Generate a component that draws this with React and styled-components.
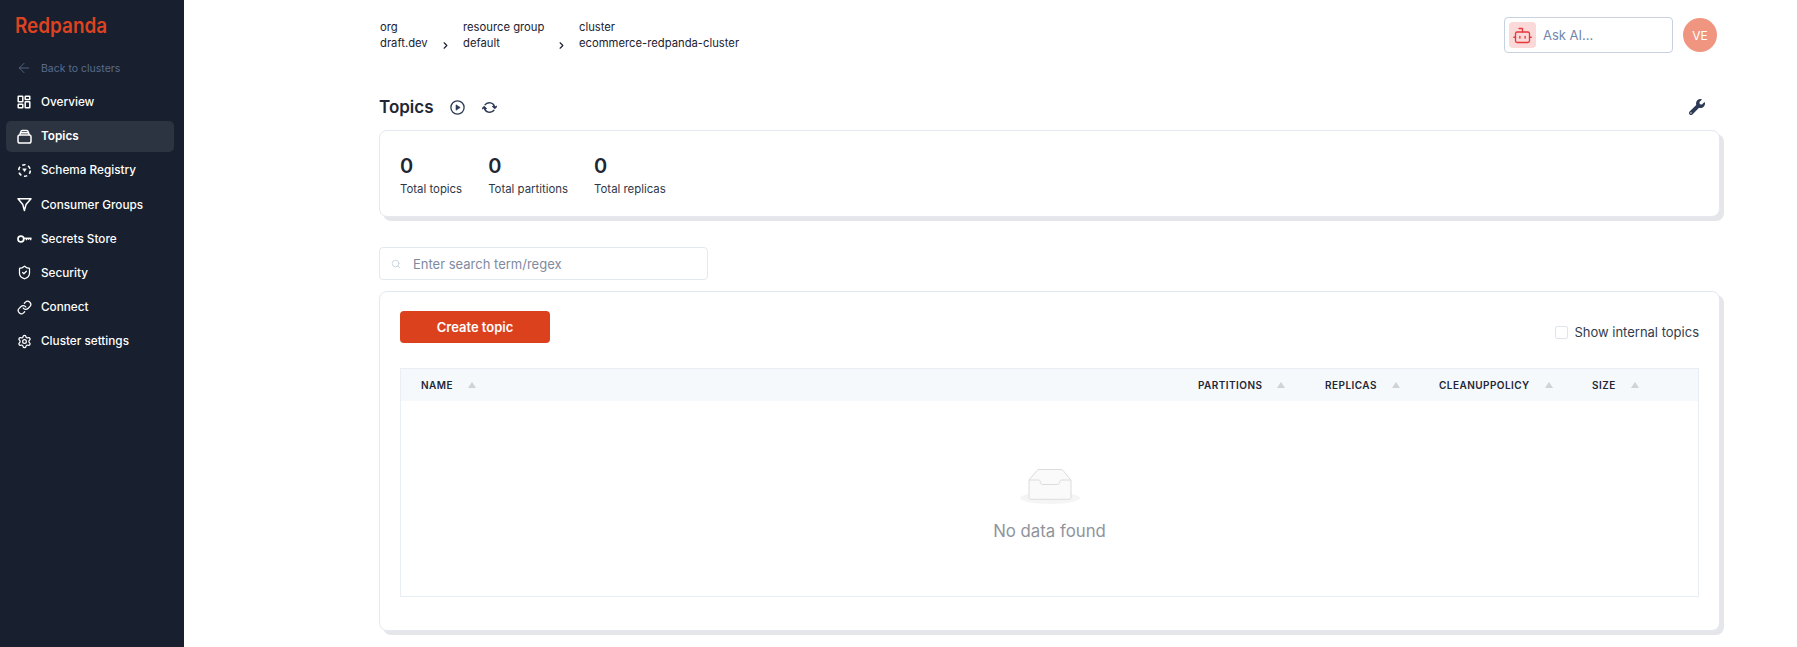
import React from "react";
import styled, { createGlobalStyle } from "styled-components";
import { ArrowLeft, Bot, ChevronRight, Link, Search, Settings, ShieldCheck } from "lucide-react";
import { FaWrench } from "react-icons/fa";

const Global = createGlobalStyle`
  html, body { margin: 0; padding: 0; background: #fff; height: 100%; overflow: hidden; }
  body { font-family: Inter, "Liberation Sans", sans-serif; color: #1a202c; }
  * { box-sizing: border-box; }
`;

const Page = styled.div`
  display: flex;
  width: 1797px;
  height: 647px;
  overflow: hidden;
`;

const Sidebar = styled.aside`
  width: 184px;
  flex: none;
  background: #181f2e;
  color: #fff;
  padding: 13px 10px 0 6px;
`;

const Logo = styled.div`
  font-size: 21px;
  line-height: 25px;
  font-weight: 600;
  color: #dd4320;
  padding-left: 10px;
  transform: scaleX(0.9);
  transform-origin: left;
`;

const BackLink = styled.div`
  display: flex;
  align-items: center;
  gap: 9px;
  height: 20px;
  margin-top: 20px;
  padding-left: 10px;
  color: #5a6b8c;
  font-size: 10.5px;
`;

const Nav = styled.nav`
  display: flex;
  flex-direction: column;
  margin-top: 8.5px;
  gap: 3.2px;
`;

const NavItem = styled.div`
  display: flex;
  align-items: center;
  gap: 10px;
  height: 31px;
  padding-left: 11px;
  border-radius: 5px;
  font-size: 11.75px;
  color: #fff;
  background: ${(p) => (p.$active ? "#2c3341" : "transparent")};
  font-weight: ${(p) => (p.$active ? 600 : 500)};
`;

const IconSlot = styled.span`
  width: 14px;
  height: 14px;
  flex: none;
  display: flex;
  align-items: center;
  justify-content: center;
  & > svg { flex: none; }
`;

const Main = styled.main`
  flex: 1;
  min-width: 0;
  padding: 19px 73px 0 195px;
`;

const TopBar = styled.header`
  display: flex;
  justify-content: space-between;
  align-items: flex-start;
  height: 77px;
`;

const Crumbs = styled.div`
  display: flex;
  padding-left: 1px;
`;

const Crumb = styled.div`
  width: ${(p) => p.$width}px;
  font-size: 11.25px;
  line-height: 16px;
  color: #1a2230;
  position: relative;
`;

const CrumbChevron = styled(ChevronRight)`
  position: absolute;
  right: 12px;
  top: 21px;
`;

const TopRight = styled.div`
  display: flex;
  align-items: center;
  gap: 10px;
  margin-right: 7px;
  margin-top: -2px;
`;

const AskBox = styled.div`
  width: 169px;
  height: 36px;
  border: 1px solid #c8d1e2;
  border-radius: 4px;
  display: flex;
  align-items: center;
  padding-left: 4px;
  gap: 7px;
  color: #7088ad;
  font-size: 13px;
`;

const BotTile = styled.span`
  width: 27px;
  height: 26px;
  border-radius: 4px;
  background: #fbd9d9;
  color: #e5383b;
  display: flex;
  align-items: center;
  justify-content: center;
`;

const Avatar = styled.div`
  width: 34px;
  height: 34px;
  border-radius: 50%;
  background: #f09580;
  color: #fff;
  display: flex;
  align-items: center;
  justify-content: center;
  font-size: 12px;
`;

const TitleRow = styled.div`
  display: flex;
  align-items: center;
  height: 22px;
`;

const Title = styled.h1`
  margin: 0 16px 0 0;
  font-size: 17px;
  line-height: 22px;
  font-weight: 600;
  color: #1f2735;
`;

const TitleIcon = styled.span`
  display: flex;
  color: #2c3a55;
  margin-right: 17px;
`;

const Wrench = styled(FaWrench)`
  margin-left: auto;
  margin-right: 19px;
  color: #2c3a55;
`;

const Card = styled.section`
  background: #fff;
  border: 1px solid #e4e8f0;
  border-radius: 8px;
  box-shadow: 4px 4px 0 #e5e6ea;
  width: 1341px;
`;

const StatsCard = styled(Card)`
  margin-top: 12px;
  height: 87px;
  padding: 23px 20px 0;
  display: flex;
  gap: 26px;
`;

const Stat = styled.div`
  display: flex;
  flex-direction: column;
`;

const StatValue = styled.div`
  font-size: 20px;
  line-height: 24px;
  font-weight: 600;
  color: #1f2735;
`;

const StatLabel = styled.div`
  font-size: 11.4px;
  line-height: 14px;
  margin-top: 4px;
  color: #2f3747;
`;

const SearchBox = styled.div`
  margin-top: 30px;
  width: 329px;
  height: 33px;
  border: 1px solid #e4e8f0;
  border-radius: 4px;
  display: flex;
  align-items: center;
  padding-left: 11px;
  gap: 12px;
  color: #7f8aa0;
  font-size: 13px;
`;

const TableCard = styled(Card)`
  margin-top: 11px;
  height: 340px;
  padding: 19px 20px 0;
`;

const Toolbar = styled.div`
  display: flex;
  justify-content: space-between;
  align-items: flex-start;
`;

const CreateButton = styled.button`
  width: 150px;
  height: 32px;
  background: #dc411d;
  color: #fff;
  border: 0;
  border-radius: 4px;
  font: 600 13px Inter, sans-serif;
`;

const Toggle = styled.label`
  display: flex;
  align-items: center;
  gap: 6px;
  margin-top: 13px;
  font-size: 13px;
  color: #343c4c;
`;

const Box = styled.span`
  width: 13px;
  height: 13px;
  border: 1px solid #e0e4ec;
  border-radius: 2px;
`;

const TableFrame = styled.div`
  margin-top: 25px;
  height: 229px;
  border: 1px solid #e9edf4;
`;

const HeaderRow = styled.div`
  display: flex;
  align-items: center;
  height: 32px;
  background: #f6f9fc;
`;

const HeaderCell = styled.div`
  display: flex;
  align-items: center;
  gap: 15px;
  font-size: 10px;
  font-weight: 600;
  letter-spacing: 0.45px;
  color: #1f2735;
  width: ${(p) => p.$width}px;
  flex: ${(p) => (p.$grow ? 1 : "none")};
  padding-left: ${(p) => p.$pad || 0}px;
`;

const SortArrow = styled.span`
  width: 0;
  height: 0;
  border-left: 4px solid transparent;
  border-right: 4px solid transparent;
  border-bottom: 6px solid #cfd2d6;
`;

const Empty = styled.div`
  display: flex;
  flex-direction: column;
  align-items: center;
  padding-top: 66px;
  gap: 16px;
  font-size: 16.8px;
  color: #8f949c;
`;

const iconProps = { size: 15, strokeWidth: 2, color: "#fff" };

const OverviewIcon = () => (
  <svg width="14" height="14" viewBox="0 0 14 14" fill="none" stroke="#fff" strokeWidth="1.5">
    <rect x="1.2" y="1.2" width="4.6" height="5.6" rx=".5" />
    <rect x="8.2" y="1.2" width="4.6" height="3.2" rx=".5" />
    <rect x="1.2" y="9.2" width="4.6" height="3.6" rx=".5" />
    <rect x="8.2" y="6.8" width="4.6" height="6" rx=".5" />
  </svg>
);

const TopicsIcon = () => (
  <svg width="15" height="15" viewBox="0 0 15 15" fill="none" stroke="#fff" strokeWidth="1.5">
    <rect x="1" y="6" width="13" height="8" rx="1.8" />
    <path d="M2.800 6 3.800 2.800C4 2 4.500 1.400 5.300 1.400h4.400c.8 0 1.300.6 1.500 1.400L12.200 6M3.500 3.800h8" />
  </svg>
);

const SchemaIcon = () => (
  <svg width="15" height="15" viewBox="0 0 15 15" fill="none" stroke="#fff" strokeWidth="1.6">
    <circle cx="7.5" cy="7.5" r="5.8" strokeDasharray="3.4 2.670" />
    <path d="M5.600 5.800h3.800L7.500 8.800z" fill="#fff" strokeWidth=".4" />
  </svg>
);

const FunnelIcon = () => (
  <svg width="15" height="15" viewBox="0 0 15 15" fill="none" stroke="#fff" strokeWidth="1.5" strokeLinejoin="round">
    <path d="M1 1.800h13L9 7.600 7.400 13.600 5.800 7.600z" />
  </svg>
);

const KeyIcon = () => (
  <svg width="15" height="10" viewBox="0 0 15 10" fill="none" stroke="#fff" strokeWidth="1.7">
    <circle cx="3.900" cy="5" r="2.900" />
    <path d="M6.800 4.400h7.700" />
    <path d="M9.500 4.400v1.800M11.500 4.400v1.400M13.700 4.400v1.800" strokeWidth="1.200" />
  </svg>
);

const PlayIcon = () => (
  <svg width="15" height="15" viewBox="0 0 15 15" fill="none" stroke="currentColor" strokeWidth="1.3">
    <circle cx="7.5" cy="7.5" r="6.6" />
    <path d="M6 4.800 10.200 7.500 6 10.200z" fill="currentColor" strokeWidth=".6" />
  </svg>
);

const SyncIcon = () => (
  <svg width="15" height="15" viewBox="0 0 15 15" fill="none" stroke="currentColor" strokeWidth="1.5">
    <path d="M2.800 5.200A5.400 5.400 0 0 1 12.700 7.600M10.500 6l2.300 2.200L14.800 6" />
    <path d="M12.200 9.800A5.400 5.400 0 0 1 2.300 7.400M4.500 9 2.200 6.800.2 9" />
  </svg>
);

const InboxIcon = () => (
  <svg width="60" height="38" viewBox="0 0 60 38">
    <ellipse cx="30" cy="31" rx="30" ry="6" fill="#f5f5f5" />
    <path d="M9 13 17 3.500C17.500 2.800 18.200 2.500 19 2.500h22c.8 0 1.500.3 2 1L51 13v17.500c0 1-.8 1.800-1.800 1.800H10.800c-1 0-1.800-.8-1.800-1.800z" fill="#fafafa" stroke="#dcdcdc" />
    <path d="M9 13h9.500c1 0 1.800.8 1.800 1.800 0 1.500 1 2.700 2.500 2.700h14.400c1.500 0 2.500-1.200 2.500-2.700 0-1 .8-1.800 1.800-1.800H51" fill="none" stroke="#dcdcdc" />
  </svg>
);

const items = [
  ["Overview", <OverviewIcon />],
  ["Topics", <TopicsIcon />, true],
  ["Schema Registry", <SchemaIcon />],
  ["Consumer Groups", <FunnelIcon />],
  ["Secrets Store", <KeyIcon />],
  ["Security", <ShieldCheck {...iconProps} />],
  ["Connect", <Link {...iconProps} />],
  ["Cluster settings", <Settings {...iconProps} />],
];

const crumbs = [
  ["org", "draft.dev", 83],
  ["resource group", "default", 116],
  ["cluster", "ecommerce-redpanda-cluster", 200],
];

const stats = ["Total topics", "Total partitions", "Total replicas"];

const columns = [
  ["PARTITIONS", 127],
  ["REPLICAS", 114],
  ["CLEANUPPOLICY", 153],
  ["SIZE", 106],
];

export default function App() {
  return (
    <Page>
      <Global />
      <Sidebar>
        <Logo>Redpanda</Logo>
        <BackLink>
          <ArrowLeft size={16} strokeWidth={1.3} />
          <span>Back to clusters</span>
        </BackLink>
        <Nav>
          {items.map(([label, icon, active]) => (
            <NavItem key={label} $active={active}>
              <IconSlot>{icon}</IconSlot>
              {label}
            </NavItem>
          ))}
        </Nav>
      </Sidebar>
      <Main>
        <TopBar>
          <Crumbs>
            {crumbs.map(([top, bottom, width], i) => (
              <Crumb key={top} $width={width}>
                <div>{top}</div>
                <div>{bottom}</div>
                {i < 2 && <CrumbChevron size={11} strokeWidth={2.5} />}
              </Crumb>
            ))}
          </Crumbs>
          <TopRight>
            <AskBox>
              <BotTile>
                <Bot size={21} strokeWidth={1.5} />
              </BotTile>
              Ask AI...
            </AskBox>
            <Avatar>VE</Avatar>
          </TopRight>
        </TopBar>
        <TitleRow>
          <Title>Topics</Title>
          <TitleIcon><PlayIcon /></TitleIcon>
          <TitleIcon><SyncIcon /></TitleIcon>
          <Wrench size={16} />
        </TitleRow>
        <StatsCard>
          {stats.map((label) => (
            <Stat key={label}>
              <StatValue>0</StatValue>
              <StatLabel>{label}</StatLabel>
            </Stat>
          ))}
        </StatsCard>
        <SearchBox>
          <Search size={10} color="#c6cedd" strokeWidth={2} />
          Enter search term/regex
        </SearchBox>
        <TableCard>
          <Toolbar>
            <CreateButton>Create topic</CreateButton>
            <Toggle>
              <Box />
              Show internal topics
            </Toggle>
          </Toolbar>
          <TableFrame>
            <HeaderRow>
              <HeaderCell $grow $pad={20}>NAME<SortArrow /></HeaderCell>
              {columns.map(([label, width]) => (
                <HeaderCell key={label} $width={width}>{label}<SortArrow /></HeaderCell>
              ))}
            </HeaderRow>
            <Empty>
              <InboxIcon />
              No data found
            </Empty>
          </TableFrame>
        </TableCard>
      </Main>
    </Page>
  );
}
